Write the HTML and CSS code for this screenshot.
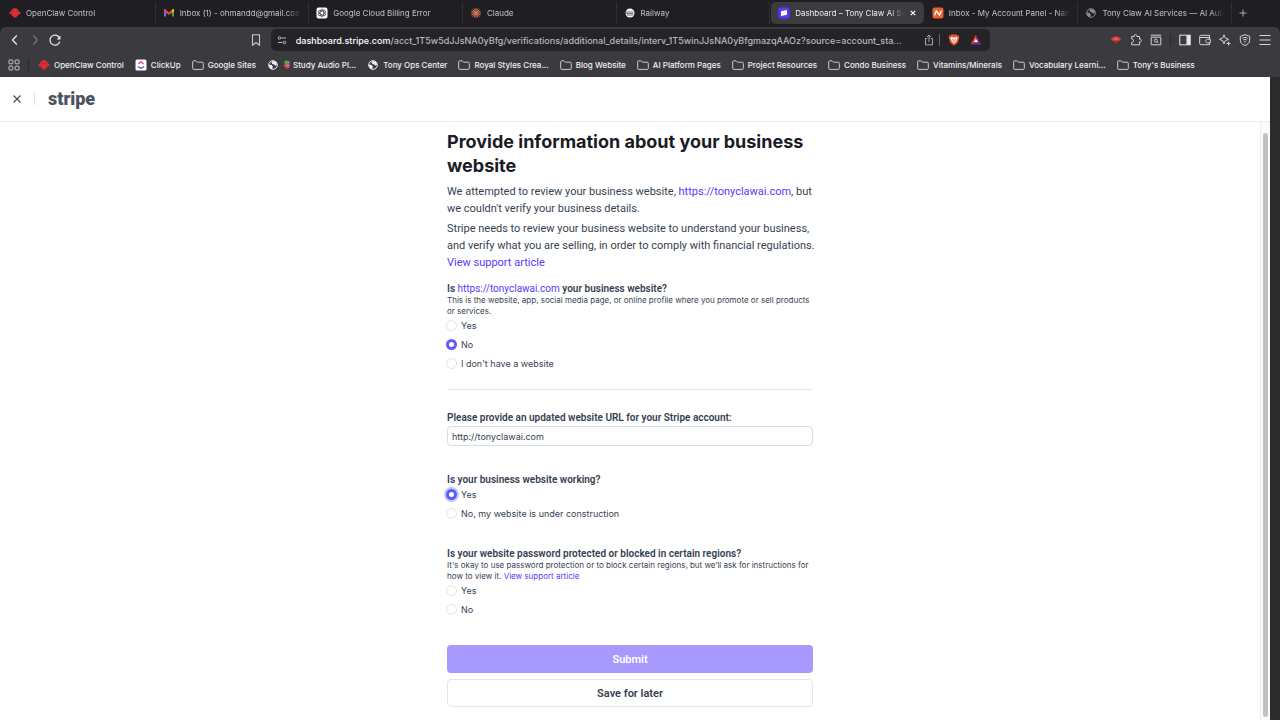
FILE: index.html
```html
<!DOCTYPE html>
<html lang="en">
<head>
    <meta charset="UTF-8">
    <meta name="viewport" content="width=device-width, initial-scale=1.0">
    <title>Dashboard – Tony Claw AI Services</title>
    <link rel="stylesheet" href="styles.css">
</head>
<body>
    <!-- shared icons -->
    <svg class="sprite" aria-hidden="true">
        <symbol id="claw" viewBox="0 0 12 12">
            <path d="M6 1.2c2.600 0 4 1.900 4 4.200 0 2-1.200 3.600-2.500 4.300v1.100h-1v-.8h-1v.8h-1V9.700C3.200 9 2 7.400 2 5.400c0-2.300 1.400-4.200 4-4.200z" fill="#d8302f"/>
            <circle cx="1.600" cy="6" r="1.200" fill="#d8302f"/>
            <circle cx="10.400" cy="6" r="1.200" fill="#d8302f"/>
            <circle cx="4.600" cy="4.300" r=".5" fill="#701818"/>
            <circle cx="7.400" cy="4.300" r=".5" fill="#701818"/>
        </symbol>
        <symbol id="folder" viewBox="0 0 12 12">
            <path d="M.7 2.800c0-.6.400-1 1-1h2.400l1.300 1.400h4.900c.6 0 1 .4 1 1v5.200c0 .6-.4 1-1 1H1.700c-.6 0-1-.4-1-1z" fill="none" stroke="#c9c9cd"/>
        </symbol>
        <symbol id="globe" viewBox="0 0 12 12">
            <circle cx="6" cy="6" r="4.300" fill="none" stroke="currentColor"/>
            <path d="M1.800 5.500l2.800.6 1.200 1.300-.6 2.900C3 10 1.800 8 1.800 5.500zM5 1.900l4 .9 1 2.700-1.500 1.200-1.300-1.300-1.800-.3-.9-1.300z" fill="currentColor"/>
        </symbol>
    </svg>

    <div class="tab-strip">
        <div class="tab"><svg class="icon"><use href="#claw"/></svg><span class="tab-title">OpenClaw Control</span></div>
        <div class="tab">
            <svg class="icon" viewBox="0 0 12 12">
                <path d="M1 2.500h2v7H1z" fill="#4285f4"/>
                <path d="M9 2.500h2v7H9z" fill="#34a853"/>
                <path d="M1 2.500l1-.5 4 3.200L10 2l1 .5v2L6 8 1 4.500z" fill="#ea4335"/>
                <path d="M9 2.800l1.200-.8.8.6v2L9 5.900z" fill="#fbbc04"/>
            </svg>
            <span class="tab-title">Inbox (1) - ohmandd@gmail.com</span>
        </div>
        <div class="tab">
            <svg class="icon" viewBox="0 0 12 12">
                <rect x=".5" y=".5" width="11" height="11" rx="2" fill="#fff"/>
                <g fill="none" stroke="#555" stroke-width=".8">
                    <ellipse cx="6" cy="6" rx="1.900" ry="4"/>
                    <ellipse cx="6" cy="6" rx="1.900" ry="4" transform="rotate(60 6 6)"/>
                    <ellipse cx="6" cy="6" rx="1.900" ry="4" transform="rotate(120 6 6)"/>
                </g>
            </svg>
            <span class="tab-title">Google Cloud Billing Error</span>
        </div>
        <div class="tab">
            <svg class="icon" viewBox="0 0 12 12">
                <path d="M6 1v10M1 6h10M2.500 2.500l7 7M9.500 2.500l-7 7M4 1.500l4 9M8 1.500l-4 9M1.500 4l9 4M1.500 8l9-4" stroke="#d97757" stroke-width=".9"/>
            </svg>
            <span class="tab-title">Claude</span>
        </div>
        <div class="tab">
            <svg class="icon" viewBox="0 0 12 12">
                <circle cx="6" cy="6" r="4.500" fill="#f2f2f2"/>
                <path d="M1.500 5h7.500M1.500 6.500h8M3 8h6" stroke="#444" stroke-width=".7"/>
            </svg>
            <span class="tab-title">Railway</span>
        </div>
        <div class="tab active">
            <svg class="icon" viewBox="0 0 12 12">
                <rect x=".5" y=".5" width="11" height="11" rx="2" fill="#533afd"/>
                <path d="M3 4.200l6-1.200v4.800L3 9z" fill="#fff"/>
            </svg>
            <span class="tab-title">Dashboard – Tony Claw AI Services</span>
            <button class="tab-close" aria-label="Close tab">
                <svg viewBox="0 0 8 8"><path d="M1.800 1.800l4.400 4.400M6.200 1.800L1.800 6.200" stroke="#fff" stroke-width="1.200"/></svg>
            </button>
        </div>
        <div class="tab">
            <svg class="icon" viewBox="0 0 12 12">
                <rect x=".5" y=".5" width="11" height="11" rx="2" fill="#e8622c"/>
                <path d="M2.500 8.200L4.300 4l3.200 4 2-4.200" fill="none" stroke="#fff" stroke-width="1.400"/>
            </svg>
            <span class="tab-title">Inbox - My Account Panel - Namecheap</span>
        </div>
        <div class="tab"><svg class="icon grey"><use href="#globe"/></svg><span class="tab-title">Tony Claw AI Services — AI Automation</span></div>
        <button class="new-tab" aria-label="New tab">
            <svg viewBox="0 0 8 8"><path d="M4 .5v7M.5 4h7" stroke="#aaaaae"/></svg>
        </button>
    </div>

    <div class="browser-bar">
        <div class="toolbar">
            <div class="nav-buttons">
                <button aria-label="Back"><svg viewBox="0 0 12 12"><path d="M7.800 1.500L3.500 6l4.300 4.500" fill="none" stroke="#e6e6e8" stroke-width="1.400"/></svg></button>
                <button aria-label="Forward"><svg viewBox="0 0 12 12"><path d="M4.200 1.500L8.500 6l-4.300 4.500" fill="none" stroke="#77777b" stroke-width="1.300"/></svg></button>
                <button aria-label="Reload"><svg viewBox="0 0 12 12"><path d="M10.300 3.600A5 5 0 1 0 10.800 7.600" fill="none" stroke="#e6e6e8" stroke-width="1.300"/><path d="M11.500 1.500v4H7.800z" fill="#e6e6e8"/></svg></button>
            </div>
            <button class="bookmark-button" aria-label="Bookmark this page"><svg viewBox="0 0 12 12"><path d="M2.500.7h7v10.600L6 8.500l-3.500 2.800z" fill="none" stroke="#c9c9cd" stroke-width="1.100"/></svg></button>
            <div class="address">
                <svg class="icon" viewBox="0 0 12 12"><path d="M5.500 4H10M2 8.500h4.500" stroke="#b9b9bd"/><circle cx="3.500" cy="4" r="1.300" fill="none" stroke="#b9b9bd"/><circle cx="8.500" cy="8.500" r="1.300" fill="none" stroke="#b9b9bd"/></svg>
                <span class="url"><span class="host">dashboard.stripe.com</span>/acct_1T5w5dJJsNA0yBfg/verifications/additional_details/interv_1T5winJJsNA0yBfgmazqAAOz?source=account_sta...</span>
                <button aria-label="Share"><svg viewBox="0 0 12 12"><path d="M4.200 4.500H2.500v6.300h7V4.500H7.800M6 8V1.200M4 3l2-2 2 2" fill="none" stroke="#b5b5b9" stroke-width=".9"/></svg></button>
                <span class="divider"></span>
                <button class="shields" aria-label="Brave Shields"><svg viewBox="0 0 12 12"><path d="M3.500.5h5l1 1h1.200l.6 2-1.400 5L6 11.800 2.100 8.500l-1.400-5 .6-2h1.200z" fill="#fb542b"/><path d="M3 3l3 .6L9 3l.6 1.600-1.600 3L6 9.600l-2-2-1.600-3z" fill="#fff"/><path d="M4.500 5L6 8l1.500-3" fill="none" stroke="#fb542b" stroke-width=".8"/></svg></button>
                <button class="rewards" aria-label="Brave Rewards"><svg viewBox="0 0 12 12"><path d="M6 .8v6.400L.5 10.800z" fill="#ff4724"/><path d="M6 .8l5.500 10L6 7.200z" fill="#9e1f63"/><path d="M.5 10.800h11L6 7.200z" fill="#662d91"/><path d="M6 4.800l2 3.500H4z" fill="#fff"/></svg></button>
            </div>
            <div class="tools">
                <button aria-label="Red hat extension"><svg viewBox="0 0 12 12"><path d="M.8 5l3.200-2.500h4L11.200 5 9 7H3z" fill="#e23b3b"/><path d="M4 6.500h4L6 10z" fill="#c93030"/><path d="M4 5h4" stroke="#f0a0a0" stroke-width=".7"/></svg></button>
                <button aria-label="Extensions"><svg viewBox="0 0 12 12"><path d="M1.700 2.500h2.500C4 1 4.800.6 5.500.6S7 1 6.800 2.500h2.700v2.700c1.500-.2 1.900.6 1.900 1.300s-.4 1.500-1.900 1.300v3H1.700V8.500C3 8.500 3.500 7.700 3.500 6.700S3 5 1.700 5z" fill="none" stroke="#d5d5d8"/></svg></button>
                <button aria-label="History search"><svg viewBox="0 0 12 12"><path d="M.8 1.200h10.400M1.200 3.200h9.600v7.600H1.200z" fill="none" stroke="#d5d5d8"/><circle cx="5.800" cy="6.600" r="1.500" fill="none" stroke="#d5d5d8"/><path d="M7 7.800l1.300 1.300" stroke="#d5d5d8"/></svg></button>
                <span class="divider dark"></span>
                <button aria-label="Sidebar"><svg viewBox="0 0 12 12"><rect x=".8" y="1.200" width="10.400" height="9.600" fill="none" stroke="#e6e6e8"/><path d="M7.500 1.200h3.700v9.600H7.500z" fill="#e6e6e8"/></svg></button>
                <button aria-label="Wallet"><svg viewBox="0 0 12 12"><path d="M10.500 3.500V1.300H2C1 1.300.7 2 .7 2.500v7c0 .8.500 1.200 1.200 1.200h8.600V9M.8 3.500h9.700v1.700M11.300 5.200v3.600H8.500c-2.400 0-2.400-3.600 0-3.600z" fill="none" stroke="#d5d5d8"/></svg></button>
                <button aria-label="Leo AI"><svg viewBox="0 0 12 12"><path d="M5 .8l1.300 3.100 3.200 1.400-3.200 1.400L5 9.800 3.700 6.700.5 5.300l3.200-1.400zM9.500 7.500v4M7.500 9.500h4" fill="none" stroke="#d5d5d8"/></svg></button>
                <button aria-label="VPN"><svg viewBox="0 0 12 12"><path d="M6 .7l4.700 1.600v4C10.700 9 8.500 10.600 6 11.500 3.500 10.600 1.300 9 1.300 6.300v-4zM3.300 4.200c1.800-1 3.600-1 5.400 0M4.200 6c1.200-.7 2.400-.7 3.600 0M6 7v1.500" fill="none" stroke="#d5d5d8"/></svg></button>
                <button aria-label="Menu"><svg viewBox="0 0 12 12"><path d="M.5 1.500h11M.5 6h11M.5 10.500h11" stroke="#d5d5d8" stroke-width="1.100"/></svg></button>
            </div>
        </div>

        <nav class="bookmarks">
            <button class="apps" aria-label="Apps"><svg viewBox="0 0 12 12"><g fill="none" stroke="#c9c9cd"><rect x="1" y="1" width="3.800" height="3.800" rx=".6"/><rect x="7.200" y="1" width="3.800" height="3.800" rx=".6"/><rect x="1" y="7.200" width="3.800" height="3.800" rx=".6"/><rect x="7.200" y="7.200" width="3.800" height="3.800" rx=".6"/></g></svg></button>
            <span class="divider dark"></span>
            <a href="#"><svg class="icon"><use href="#claw"/></svg>OpenClaw Control</a>
            <a href="#"><svg class="icon" viewBox="0 0 12 12"><rect x=".5" y=".5" width="11" height="11" rx="1.500" fill="#fff"/><path d="M3.500 5L6 2.800 8.500 5" fill="none" stroke="#f0469c" stroke-width="1.400"/><path d="M3 7.500c1.600 2 4.400 2 6 0" fill="none" stroke="#6a5cf5" stroke-width="1.400"/></svg>ClickUp</a>
            <a href="#"><svg class="icon"><use href="#folder"/></svg>Google Sites</a>
            <a href="#"><svg class="icon"><use href="#globe"/></svg><span class="bookmark-name"><svg class="plant" viewBox="0 0 9 10"><path d="M1 2l3-1.500L8 2 6.500 5h-4z" fill="#4caf50"/><path d="M2 4h5l1 2-1.500 3.500h-3L1 6z" fill="#c0505a"/><path d="M3.500 6h3" stroke="#f0a0a0"/></svg>Study Audio Pl...</span></a>
            <a href="#"><svg class="icon"><use href="#globe"/></svg>Tony Ops Center</a>
            <a href="#"><svg class="icon"><use href="#folder"/></svg>Royal Styles Crea...</a>
            <a href="#"><svg class="icon"><use href="#folder"/></svg>Blog Website</a>
            <a href="#"><svg class="icon"><use href="#folder"/></svg>AI Platform Pages</a>
            <a href="#"><svg class="icon"><use href="#folder"/></svg>Project Resources</a>
            <a href="#"><svg class="icon"><use href="#folder"/></svg>Condo Business</a>
            <a href="#"><svg class="icon"><use href="#folder"/></svg>Vitamins/Minerals</a>
            <a href="#"><svg class="icon"><use href="#folder"/></svg>Vocabulary Learni...</a>
            <a href="#"><svg class="icon"><use href="#folder"/></svg>Tony's Business</a>
        </nav>
    </div>

    <div class="window">
        <header class="page-header">
            <button class="close" aria-label="Close"><svg viewBox="0 0 10 10"><path d="M1.500 1.500l7 7M8.500 1.500l-7 7" stroke="#414552" stroke-width="1.100"/></svg></button>
            <span class="header-line"></span>
            <a href="#" class="logo">stripe</a>
        </header>

        <div class="page-body">
            <main>
                <form class="form">
                    <h1>Provide information about your business website</h1>
                    <p>We attempted to review your business website, <a href="#">https://tonyclawai.com</a>, but we couldn't verify your business details.</p>
                    <p>Stripe needs to review your business website to understand your business, and verify what you are selling, in order to comply with financial regulations. <a href="#">View support article</a></p>

                    <fieldset class="question first">
                        <legend>Is <a href="#">https://tonyclawai.com</a> your business website?</legend>
                        <div class="hint">This is the website, app, social media page, or online profile where you promote or sell products or services.</div>
                        <label class="option"><input type="radio" name="is_website">Yes</label>
                        <label class="option"><input type="radio" name="is_website" checked>No</label>
                        <label class="option"><input type="radio" name="is_website">I don't have a website</label>
                    </fieldset>

                    <hr>

                    <div class="question">
                        <label class="field-label" for="url">Please provide an updated website URL for your Stripe account:</label>
                        <input type="text" id="url" name="url" value="http://tonyclawai.com">
                    </div>

                    <fieldset class="question">
                        <legend>Is your business website working?</legend>
                        <label class="option"><input type="radio" class="focused" name="working" checked>Yes</label>
                        <label class="option"><input type="radio" name="working">No, my website is under construction</label>
                    </fieldset>

                    <fieldset class="question">
                        <legend>Is your website password protected or blocked in certain regions?</legend>
                        <div class="hint">It's okay to use password protection or to block certain regions, but we’ll ask for instructions for how to view it. <a href="#">View support article</a></div>
                        <label class="option"><input type="radio" name="protected">Yes</label>
                        <label class="option"><input type="radio" name="protected">No</label>
                    </fieldset>

                    <div class="actions">
                        <button type="submit" class="btn primary">Submit</button>
                        <button type="button" class="btn">Save for later</button>
                    </div>
                </form>
            </main>
            <div class="scrollbar"><div class="thumb"></div></div>
        </div>
    </div>
</body>
</html>
```

FILE: styles.css
```css
* {
    box-sizing: border-box;
}

body {
    margin: 0;
    height: 100vh;
    display: flex;
    flex-direction: column;
    overflow: hidden;
    background-color: #1f1f23;
    font-family: Inter, "Liberation Sans", sans-serif;
    font-size: 8px;
}

button {
    display: flex;
    align-items: center;
    justify-content: center;
    padding: 0;
    border: none;
    background: none;
    font-family: inherit;
    cursor: pointer;
}

a {
    color: #533afd;
    text-decoration: none;
}

.sprite {
    position: absolute;
    width: 0;
    height: 0;
}

.icon {
    width: 12px;
    height: 12px;
    flex: none;
}

.divider {
    width: 1px;
    height: 12px;
    background-color: #66666a;
}

.divider.dark {
    background-color: #29292c;
}

/* Browser tabs */
.tab-strip {
    display: flex;
    flex: none;
    height: 27px;
    padding: 0 0 1px 2px;
    align-items: center;
}

.tab {
    flex: 1;
    min-width: 0;
    height: 22px;
    padding: 0 7px;
    display: flex;
    align-items: center;
    gap: 5px;
    color: #c4c4c8;
    border-right: 1px solid #2f2f34;
}

.tab-title {
    flex: 1;
    overflow: hidden;
    white-space: nowrap;
    -webkit-mask-image: linear-gradient(to left, transparent, #000 14px);
    mask-image: linear-gradient(to left, transparent, #000 14px);
}

.tab.active {
    margin: 0 1px;
    background-color: #3b3b40;
    border: none;
    border-radius: 5px;
    color: #f0f0f2;
}

.tab-close svg,
.new-tab svg {
    display: block;
    width: 8px;
    height: 8px;
}

.new-tab {
    width: 22px;
    margin-right: 26px;
}

.grey {
    color: #8c8c90;
}

/* Toolbar and bookmarks */
.browser-bar {
    flex: none;
    height: 50px;
    background-color: #3b3b3f;
    border-radius: 6px 6px 0 0;
}

.toolbar {
    display: flex;
    height: 26px;
    align-items: center;
    padding: 0 9px;
}

.toolbar button svg {
    width: 12px;
    height: 12px;
}

.nav-buttons {
    display: flex;
    gap: 8px;
    flex: 12;
}

.bookmark-button {
    margin-right: 9px;
}

.address {
    width: 57%;
    height: 22px;
    display: flex;
    align-items: center;
    gap: 4px;
    padding: 0 8px 0 5px;
    background-color: #242428;
    border-radius: 5px;
    color: #b9b9bd;
    font-size: 9px;
    font-weight: 500;
}

.address .icon {
    margin-right: 4px;
}

.shields {
    margin-left: 4px;
}

.rewards {
    margin-left: 6px;
}

.url {
    flex: 1;
    overflow: hidden;
    white-space: nowrap;
    text-overflow: ellipsis;
}

.host {
    color: #ffffff;
}

.tools {
    flex: 14;
    display: flex;
    align-items: center;
    justify-content: flex-end;
    gap: 8px;
}

.bookmarks {
    display: flex;
    height: 23px;
    align-items: center;
    gap: 11px;
    padding: 0 8px;
    white-space: nowrap;
}

.bookmarks .divider {
    margin-right: -2px;
    margin-left: -3px;
}

.bookmarks a {
    display: flex;
    align-items: center;
    gap: 4px;
    color: #f0f0f2;
    font-weight: 500;
}

.bookmark-name {
    display: flex;
    align-items: center;
    gap: 2px;
}

.apps svg {
    width: 12px;
    height: 12px;
}

.plant {
    width: 8px;
    height: 9px;
}

/* Page */
.window {
    flex: 1;
    min-height: 0;
    display: flex;
    flex-direction: column;
    margin-right: 10px;
    background-color: #ffffff;
    box-shadow: 10px 0 0 #2b2b2d;
}

.page-header {
    flex: none;
    height: 45px;
    display: flex;
    align-items: center;
    padding: 0 12px;
    border-bottom: 1px solid #ebeef1;
}

.close svg {
    width: 10px;
    height: 10px;
}

.header-line {
    width: 1px;
    height: 12px;
    margin: 0 13px 0 12px;
    background-color: #d8dee4;
}

.logo {
    font-family: Roboto, sans-serif;
    font-size: 18px;
    font-weight: 900;
    line-height: 20px;
    color: #4b5062;
}

.page-body {
    flex: 1;
    min-height: 0;
    display: flex;
}

main {
    flex: 1;
    overflow: hidden;
}

.form {
    max-width: 366px;
    margin: 0 auto;
    padding-top: 8px;
    color: #353f52;
    font-family: Roboto, sans-serif;
}

h1 {
    margin: 0 0 5px;
    font-family: Inter, sans-serif;
    font-size: 18px;
    line-height: 24px;
    font-weight: 700;
    color: #1a1b25;
}

p {
    margin: 0 -8px 3px 0;
    font-size: 11px;
    line-height: 17px;
}

.question {
    margin: 0 0 27px;
    padding: 0;
    border: none;
}

.first {
    margin: 11px 0 19px;
}

legend,
.field-label {
    display: block;
    padding: 0;
    font-size: 10px;
    line-height: 13px;
    font-weight: 600;
}

legend a {
    font-weight: 400;
}

.hint {
    font-family: Inter, sans-serif;
    font-size: 8px;
    line-height: 11px;
}

.option {
    display: flex;
    align-items: center;
    gap: 4px;
    height: 13px;
    margin-top: 6px;
    font-family: Inter, sans-serif;
    font-size: 9px;
}

.hint + .option,
legend + .option {
    margin-top: 2px;
}

input[type="radio"] {
    appearance: none;
    width: 11px;
    height: 11px;
    margin: 0 0 0 -1px;
    border: 1px solid #dfe3e8;
    border-radius: 50%;
    background-color: #ffffff;
}

input[type="radio"]:checked {
    border: 3px solid #625afa;
}

input[type="radio"].focused {
    box-shadow: 0 0 0 2px #b9cdf8;
}

hr {
    margin: 0 0 21px;
    border: none;
    border-top: 1px solid #e3e6ea;
}

input[type="text"] {
    display: block;
    width: 100%;
    height: 20px;
    margin-top: 2px;
    padding: 0 4px;
    border: 1px solid #d8dee4;
    border-radius: 4px;
    font-family: Inter, sans-serif;
    font-size: 9px;
    color: #353f52;
}

.actions {
    display: flex;
    flex-direction: column;
    gap: 6px;
    padding-top: 2px;
}

.btn {
    height: 28px;
    border: 1px solid #e3e6ea;
    border-radius: 4px;
    background-color: #ffffff;
    color: #353f52;
    font-size: 11px;
    font-weight: 600;
}

.btn.primary {
    border: none;
    background-color: #a899ff;
    color: #ffffff;
}

.scrollbar {
    width: 10px;
    padding: 11px 2px 3px;
    border-left: 1px solid #ececec;
    background-color: #fafafa;
}

.thumb {
    height: 100%;
    border-radius: 3px;
    background-color: #c1c1c1;
}
```
